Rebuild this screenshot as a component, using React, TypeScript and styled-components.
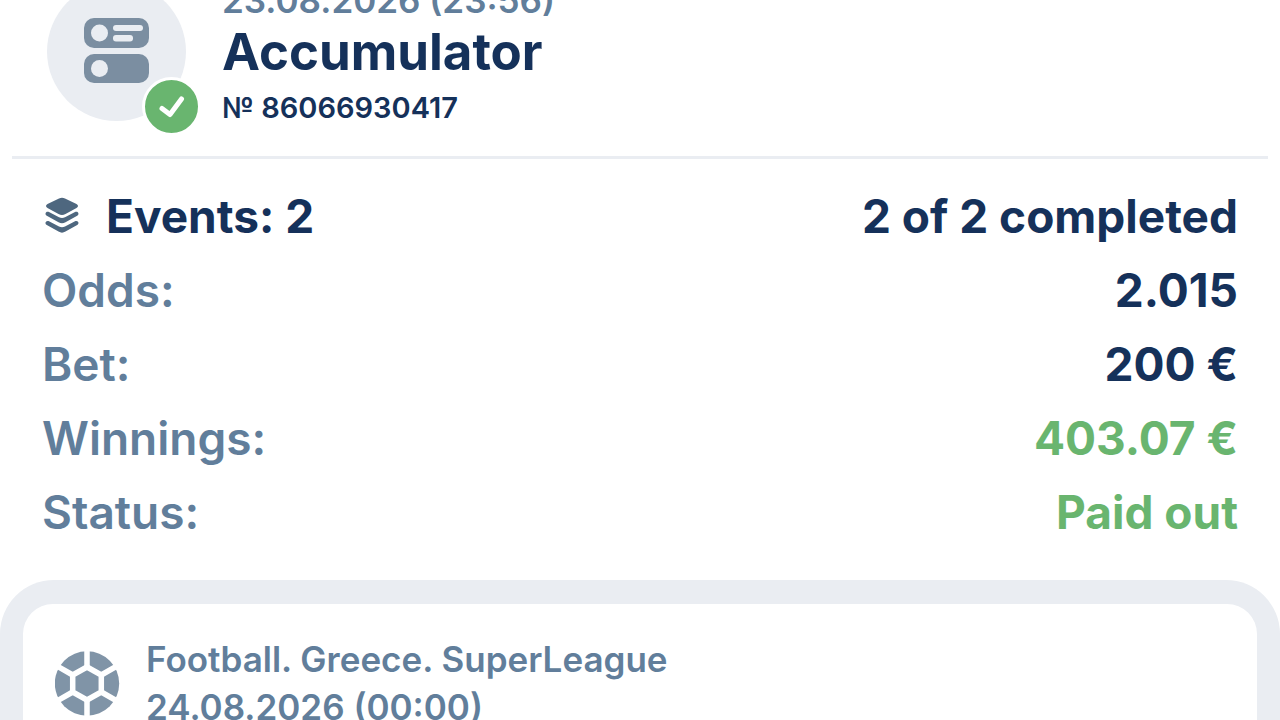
import React from "react";
import styled, { createGlobalStyle } from "styled-components";

const color = {
  navy: "#15315a",
  slate: "#617e9b",
  icon: "#7b8ea1",
  green: "#69b56f",
  mist: "#eaedf2",
};

const GlobalStyle = createGlobalStyle`
  * { box-sizing: border-box; }
  body {
    margin: 0;
    background: #fff;
    color: ${color.navy};
    font-family: Inter, "Liberation Sans", sans-serif;
  }
  h1, h2, p, dl, dt, dd { margin: 0; }
`;

const Page = styled.main`
  height: 100vh;
  overflow: hidden;
`;

const Header = styled.header`
  display: flex;
  align-items: flex-start;
  gap: 36px;
  margin: -22px 12px 0;
  padding: 0 35px 22px;
  border-bottom: 3px solid ${color.mist};
`;

const Avatar = styled.div`
  position: relative;
  flex: none;
  display: flex;
  align-items: center;
  justify-content: center;
  width: 139px;
  height: 139px;
  margin-top: 4px;
  border-radius: 50%;
  background: ${color.mist};
`;

const Badge = styled.span`
  position: absolute;
  right: -15px;
  bottom: -15px;
  display: flex;
  width: 59px;
  height: 59px;
  border: 3px solid #fff;
  border-radius: 50%;
  background: ${color.green};
`;

const DateText = styled.p`
  color: ${color.slate};
  font-size: 35px;
  font-weight: 600;
  line-height: 44px;
`;

const Title = styled.h1`
  font-size: 51px;
  font-weight: 700;
  line-height: 60px;
`;

const TicketNumber = styled.p`
  font-size: 29px;
  font-weight: 600;
  line-height: 52px;
`;

const Summary = styled.dl`
  padding: 20px 42px 31px;
`;

const Row = styled.div`
  display: flex;
  align-items: center;
  justify-content: space-between;
  font-size: 46px;
  line-height: 74px;
`;

const Label = styled.dt<{ $strong?: boolean }>`
  display: flex;
  align-items: center;
  gap: 24px;
  color: ${(p) => (p.$strong ? color.navy : color.slate)};
  font-weight: ${(p) => (p.$strong ? 700 : 600)};
`;

const Value = styled.dd<{ $positive?: boolean }>`
  color: ${(p) => (p.$positive ? color.green : color.navy)};
  font-weight: 700;
`;

const Panel = styled.section`
  padding: 24px 23px;
  border-radius: 54px 54px 0 0;
  background: ${color.mist};
`;

const EventCard = styled.article`
  display: flex;
  align-items: center;
  gap: 26px;
  padding: 31px 32px 48px;
  border-radius: 30px;
  background: #fff;
`;

const EventLine = styled.p`
  color: ${color.slate};
  font-size: 35px;
  font-weight: 600;
  line-height: 48px;
`;

const SlipIcon = () => (
  <svg width="66" height="68" viewBox="0 0 66 68" aria-hidden="true">
    <rect width="65" height="30" rx="10" fill={color.icon} />
    <rect y="36" width="65" height="29" rx="10" fill={color.icon} />
    <g fill={color.mist}>
      <circle cx="15.5" cy="15" r="8.5" />
      <circle cx="15.5" cy="50.5" r="8.5" />
      <rect x="29" y="7" width="30" height="6" rx="3" />
      <rect x="29" y="17" width="20" height="6.5" rx="3" />
    </g>
  </svg>
);

const CheckIcon = () => (
  <svg width="53" height="53" viewBox="0 0 53 53" aria-hidden="true">
    <path d="M17 28.500 L25 34.500 L36.500 19" fill="none" stroke="#fff" strokeWidth="5" strokeLinecap="round" strokeLinejoin="round" />
  </svg>
);

const LayersIcon = () => (
  <svg width="40" height="40" viewBox="0 0 40 40" aria-hidden="true">
    <g fill="#4e677f">
      <path d="M17 2.500 Q20 1.200 23 2.500 L34.500 8 Q37.500 10 34.500 12 L23.500 18 Q20 20 16.500 18 L5.500 12 Q2.500 10 5.500 8Z" />
      <path d="M6.500 15.800 L17 21.300 Q20 22.800 23 21.300 L33.500 15.800 C36.500 15 37.500 18.300 35.200 19.800 L23.500 26.200 Q20 28.400 16.500 26.200 L4.800 19.800 C2.500 18.300 3.500 15 6.500 15.800Z" />
      <path d="M6.500 25 L17 30.600 Q20 32 23 30.600 L33.500 25 C36.500 24.200 37.500 27.600 35.200 29 L23.500 35.600 Q20 37.800 16.500 35.600 L4.800 29 C2.500 27.600 3.500 24.200 6.500 25Z" />
    </g>
  </svg>
);

const BallIcon = () => (
  <svg width="65" height="65" viewBox="0 0 65 65" aria-hidden="true">
    <circle cx="32" cy="32.500" r="32.200" fill="#8094a7" />
    <g stroke="#fff" strokeWidth="5.500" strokeLinejoin="round" fill="none">
      <path d="M32 16 L46.300 24 V41 L32 49 L17.700 41 V24Z" />
      <path d="M32 16 V-1 M46.300 24 L65.500 13 M46.300 41 L65.500 52 M32 49 V66 M17.700 41 L-1.500 52 M17.700 24 L-1.500 13" />
    </g>
  </svg>
);

const rows = [
  { label: "Odds:", value: "2.015" },
  { label: "Bet:", value: "200 €" },
  { label: "Winnings:", value: "403.07 €", positive: true },
  { label: "Status:", value: "Paid out", positive: true },
];

export default function App() {
  return (
    <Page>
      <GlobalStyle />
      <Header>
        <Avatar>
          <SlipIcon />
          <Badge>
            <CheckIcon />
          </Badge>
        </Avatar>
        <div>
          <DateText>23.08.2026 (23:56)</DateText>
          <Title>Accumulator</Title>
          <TicketNumber>№ 86066930417</TicketNumber>
        </div>
      </Header>
      <Summary>
        <Row>
          <Label $strong>
            <LayersIcon />
            Events: 2
          </Label>
          <Value>2 of 2 completed</Value>
        </Row>
        {rows.map((row) => (
          <Row key={row.label}>
            <Label>{row.label}</Label>
            <Value $positive={row.positive}>{row.value}</Value>
          </Row>
        ))}
      </Summary>
      <Panel>
        <EventCard>
          <BallIcon />
          <div>
            <EventLine>Football. Greece. SuperLeague</EventLine>
            <EventLine>24.08.2026 (00:00)</EventLine>
          </div>
        </EventCard>
      </Panel>
    </Page>
  );
}
